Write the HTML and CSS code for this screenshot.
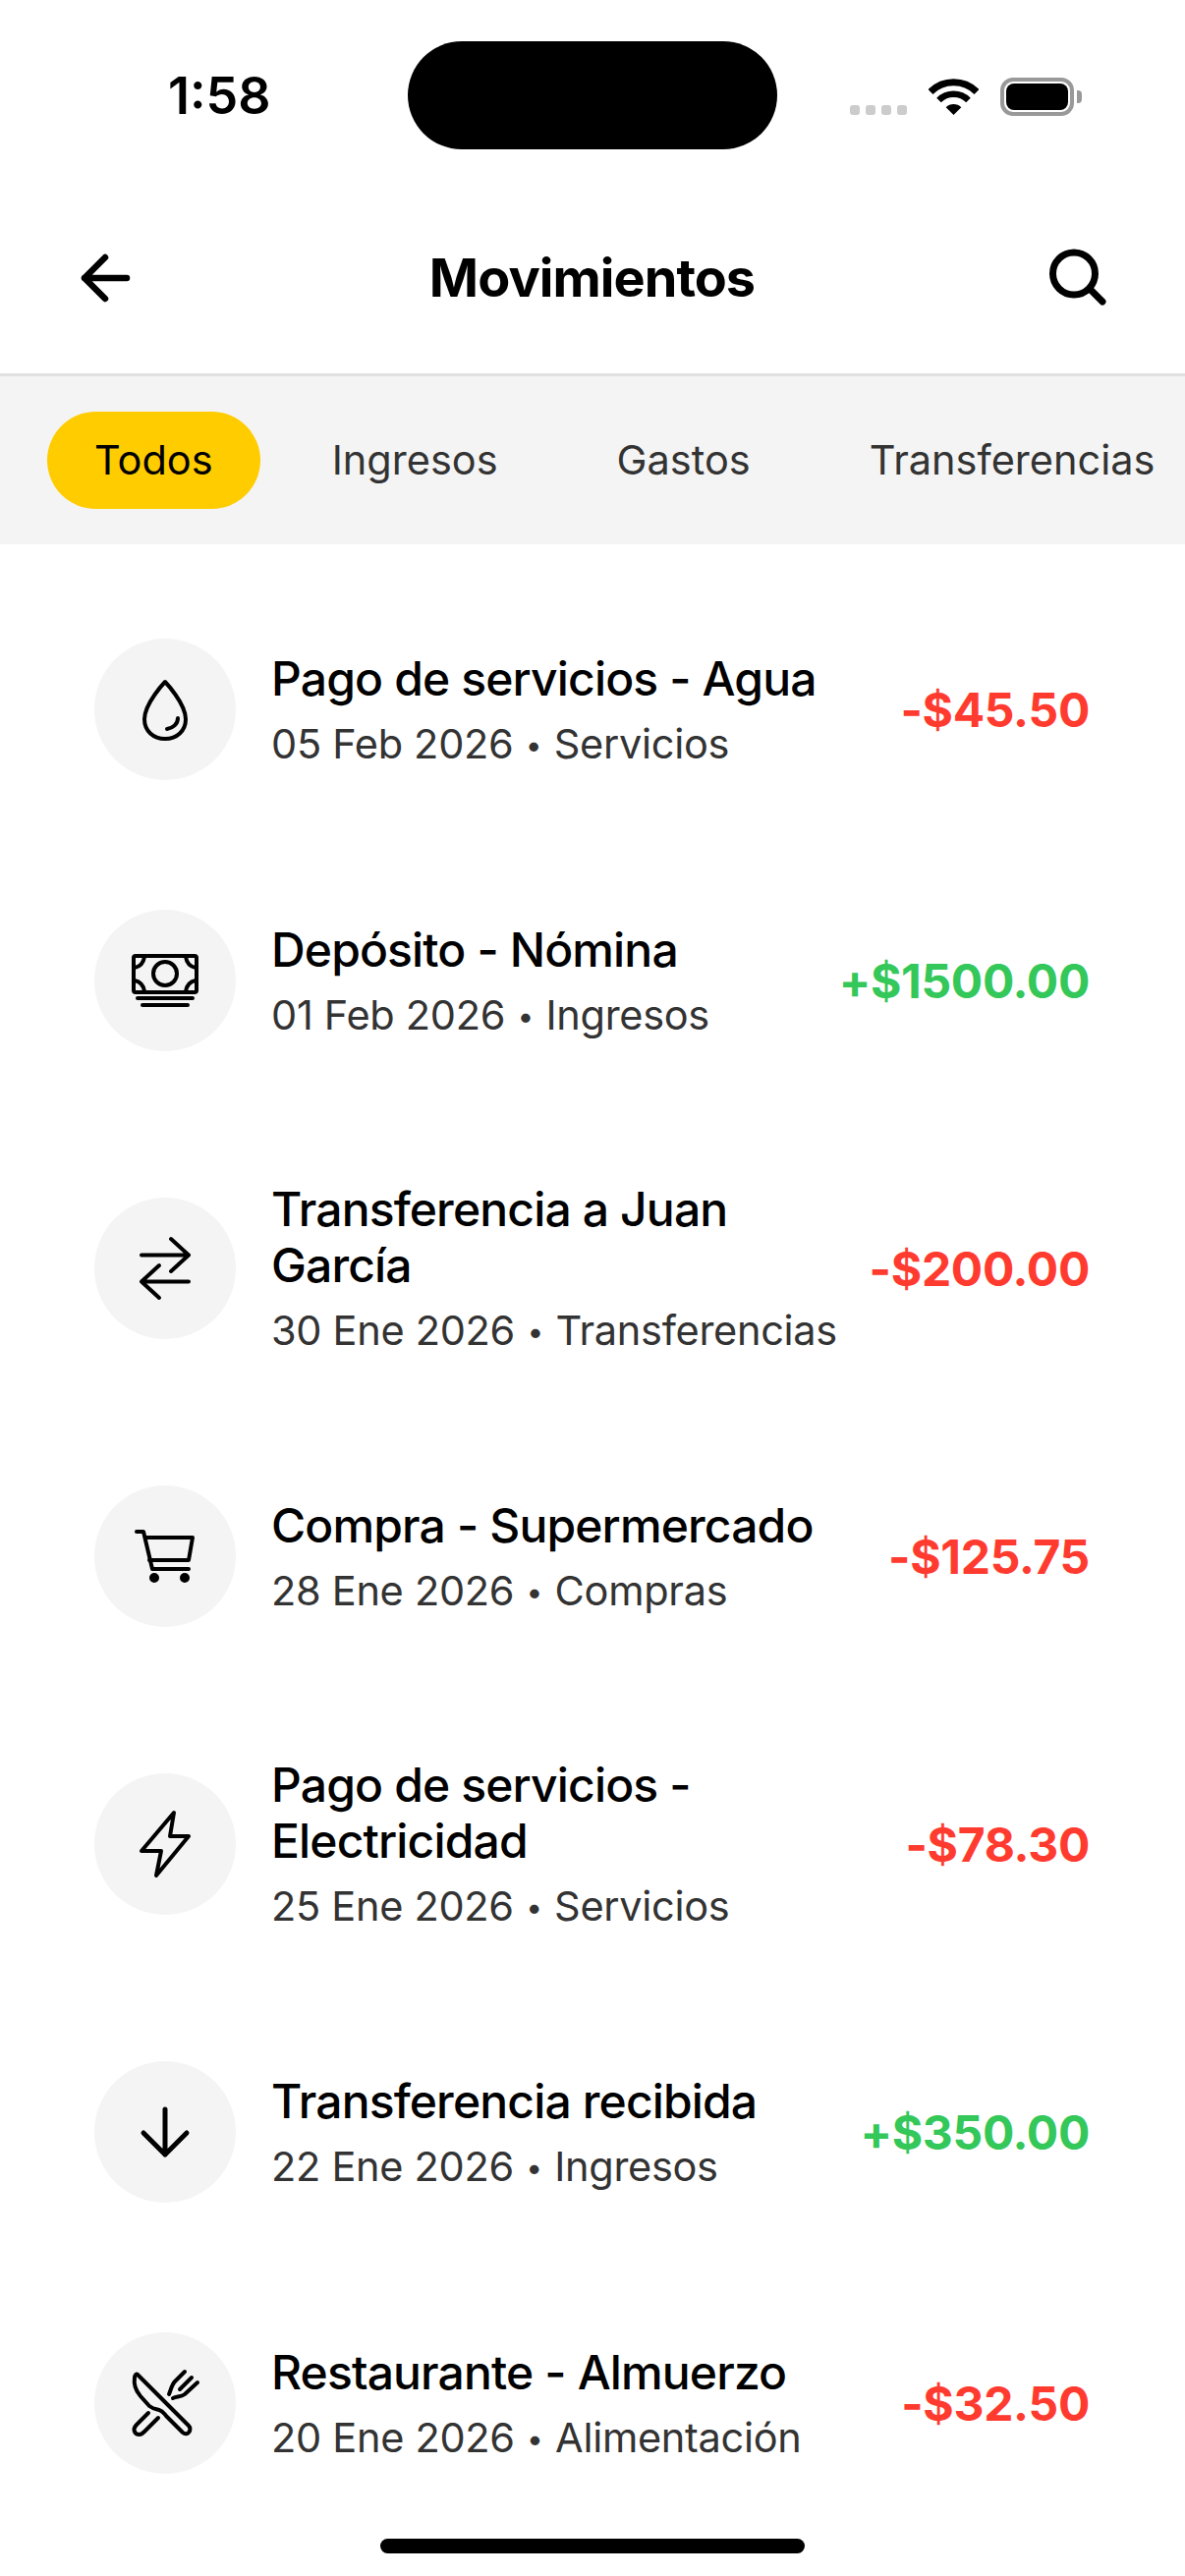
FILE: index.html
```html
<!DOCTYPE html>
<html lang="es">
<head>
    <meta charset="UTF-8">
    <title>Movimientos</title>
    <link rel="stylesheet" href="styles.css">
</head>
<body>
    <div class="screen">
        <div class="status-bar">
            <div class="status-time">1:58</div>
            <div class="island"></div>
            <div class="status-icons">
                <div class="signal"><span></span><span></span><span></span><span></span></div>
                <svg class="wifi" width="51" height="37" viewBox="0 0 51 37" fill="none" stroke="#000">
                    <path d="M2 13.5A33.25 33.25 0 0 1 49 13.5" stroke-width="7"/>
                    <path d="M10.5 22A21.25 21.25 0 0 1 40.5 22" stroke-width="6.5"/>
                    <path d="M25.5 37L17.7 29.2A11 11 0 0 1 33.3 29.2Z" fill="#000" stroke="none"/>
                </svg>
                <div class="battery"><div class="battery-fill"></div></div>
            </div>
        </div>

        <div class="header">
            <svg class="header-icon" width="60" height="60" viewBox="0 0 60 60" fill="none" stroke="#000" stroke-width="6.5" stroke-linecap="round" stroke-linejoin="round">
                <path d="M51 30H8M29 9L8 30L29 51"/>
            </svg>
            <h1 class="header-title">Movimientos</h1>
            <svg class="header-icon search" width="60" height="60" viewBox="0 0 60 60" fill="none" stroke="#000" stroke-width="7" stroke-linecap="round">
                <circle cx="26" cy="25.500" r="21.500"/>
                <path d="M42 41L55 54"/>
            </svg>
        </div>

        <div class="chips">
            <div class="chip active">Todos</div>
            <div class="chip">Ingresos</div>
            <div class="chip">Gastos</div>
            <div class="chip">Transferencias</div>
        </div>

        <div class="list">
            <div class="row">
                <div class="row-icon">
                    <svg viewBox="0 0 144 144" fill="none" stroke="#000" stroke-width="4" stroke-linecap="round" stroke-linejoin="round">
                        <path d="M72 44C72 44 51 66 51 82C51 94 60 102 72 102C84 102 93 94 93 82C93 66 72 44 72 44Z"/>
                        <path d="M74 92C80 91 85 87 85 81"/>
                    </svg>
                </div>
                <div class="row-text">
                    <div class="row-title">Pago de servicios - Agua</div>
                    <div class="row-sub">05 Feb 2026 <span class="sep">•</span> Servicios</div>
                </div>
                <div class="row-amount out">-$45.50</div>
            </div>

            <div class="row">
                <div class="row-icon">
                    <svg viewBox="0 0 144 144" fill="none" stroke="#000" stroke-width="4" stroke-linecap="round" stroke-linejoin="round">
                        <rect x="40" y="47" width="64" height="37" rx="2"/>
                        <circle cx="72" cy="65" r="12"/>
                        <path d="M41 59C46 58 50 54 51 48M103 59C98 58 94 54 93 48M41 72C46 73 50 77 51 83M103 72C98 73 94 77 93 83"/>
                        <path d="M44 90H100M49 97H95"/>
                    </svg>
                </div>
                <div class="row-text">
                    <div class="row-title">Depósito - Nómina</div>
                    <div class="row-sub">01 Feb 2026 <span class="sep">•</span> Ingresos</div>
                </div>
                <div class="row-amount in">+$1500.00</div>
            </div>

            <div class="row">
                <div class="row-icon">
                    <svg viewBox="0 0 144 144" fill="none" stroke="#000" stroke-width="4" stroke-linecap="round" stroke-linejoin="round">
                        <path d="M48 58.500H96M78 42L96 58.500L78 75"/>
                        <path d="M96 85.500H48M66 69L48 85.500L66 102"/>
                    </svg>
                </div>
                <div class="row-text">
                    <div class="row-title">Transferencia a Juan García</div>
                    <div class="row-sub">30 Ene 2026 <span class="sep">•</span> Transferencias</div>
                </div>
                <div class="row-amount out">-$200.00</div>
            </div>

            <div class="row">
                <div class="row-icon">
                    <svg viewBox="0 0 144 144" fill="none" stroke="#000" stroke-width="4" stroke-linecap="round" stroke-linejoin="round">
                        <path d="M43 47H50L59 85H96"/>
                        <path d="M52 53H100L96 76H56"/>
                        <circle cx="61" cy="94" r="3" fill="#000"/>
                        <circle cx="92" cy="94" r="3" fill="#000"/>
                    </svg>
                </div>
                <div class="row-text">
                    <div class="row-title">Compra - Supermercado</div>
                    <div class="row-sub">28 Ene 2026 <span class="sep">•</span> Compras</div>
                </div>
                <div class="row-amount out">-$125.75</div>
            </div>

            <div class="row">
                <div class="row-icon">
                    <svg viewBox="0 0 144 144" fill="none" stroke="#000" stroke-width="4" stroke-linecap="round" stroke-linejoin="round">
                        <path d="M81 40L77 64H96L63 104L68 79H48Z"/>
                    </svg>
                </div>
                <div class="row-text">
                    <div class="row-title">Pago de servicios - Electricidad</div>
                    <div class="row-sub">25 Ene 2026 <span class="sep">•</span> Servicios</div>
                </div>
                <div class="row-amount out">-$78.30</div>
            </div>

            <div class="row">
                <div class="row-icon">
                    <svg viewBox="0 0 144 144" fill="none" stroke="#000" stroke-width="5" stroke-linecap="round" stroke-linejoin="round">
                        <path d="M72 49V95M50 73L72 95L94 73"/>
                    </svg>
                </div>
                <div class="row-text">
                    <div class="row-title">Transferencia recibida</div>
                    <div class="row-sub">22 Ene 2026 <span class="sep">•</span> Ingresos</div>
                </div>
                <div class="row-amount in">+$350.00</div>
            </div>

            <div class="row">
                <div class="row-icon">
                    <svg viewBox="0 0 144 144" fill="none" stroke="#000" stroke-width="4" stroke-linecap="round" stroke-linejoin="round">
                        <path d="M44 43L96 95C100 99 95 106 90 102L74 86C71 83 70 80 66 79C62 78 60 78 56 75L47 65C41 58 40 52 41 46C41 43 43 42 44 43Z"/>
                        <path d="M55 82L43 94C39 98 40 104 46 104C48 104 49 103 51 101L65 87"/>
                        <path d="M92 40L82 50C79 53 78 58 76 63M99 46L87 58M105 51L92 63C88 66 84 65 80 67"/>
                    </svg>
                </div>
                <div class="row-text">
                    <div class="row-title">Restaurante - Almuerzo</div>
                    <div class="row-sub">20 Ene 2026 <span class="sep">•</span> Alimentación</div>
                </div>
                <div class="row-amount out">-$32.50</div>
            </div>
        </div>

        <div class="home-bar"></div>
    </div>
</body>
</html>
```

FILE: styles.css
```css
* {
    margin: 0;
    padding: 0;
    box-sizing: border-box;
}
body {
    font-family: 'Inter', 'Liberation Sans', sans-serif;
    background-color: #fff;
    color: #000;
}
.screen {
    width: 1206px;
    height: 2622px;
    position: relative;
    overflow: hidden;
    background-color: #fff;
}

/* status bar */
.status-bar {
    height: 168px;
    display: grid;
    grid-template-columns: 1fr 376px 1fr;
    padding-top: 42px;
}
.status-time {
    font-size: 52px;
    font-weight: 600;
    line-height: 60px;
    margin-top: 26px;
    padding-left: 171px;
}
.island {
    width: 376px;
    height: 110px;
    background-color: #000;
    border-radius: 56px;
}
.status-icons {
    display: flex;
    align-items: flex-end;
    height: 75px;
    padding-left: 74px;
}
.signal {
    display: flex;
    gap: 6px;
    margin-right: 22px;
}
.signal span {
    width: 10px;
    height: 10px;
    border-radius: 3px;
    background-color: #ccc;
}
.wifi {
    display: block;
    margin-right: 22px;
}
.battery {
    width: 75px;
    height: 39px;
    margin-bottom: -1px;
    border: 4px solid #999;
    border-radius: 13px;
    padding: 2px;
    position: relative;
}
.battery::after {
    content: '';
    position: absolute;
    left: 74px;
    top: 9px;
    width: 5px;
    height: 13px;
    background-color: #999;
    border-radius: 0 4px 4px 0;
}
.battery-fill {
    height: 100%;
    background-color: #000;
    border-radius: 8px;
}

/* header */
.header {
    height: 215px;
    display: grid;
    grid-template-columns: 1fr auto 1fr;
    align-items: center;
    padding: 17px 79px 0 78px;
    border-bottom: 3px solid #e0e0e0;
}
.header-icon {
    display: block;
}
.header-icon.search {
    justify-self: end;
}
.header-title {
    font-size: 54px;
    font-weight: 700;
    letter-spacing: -0.95px;
}

/* filter chips */
.chips {
    height: 171px;
    display: flex;
    align-items: center;
    gap: 25px;
    padding-left: 48px;
    background-color: #f4f4f4;
    overflow: hidden;
}
.chip {
    flex-shrink: 0;
    height: 99px;
    padding: 0 48px;
    border-radius: 50px;
    font-size: 41.5px;
    line-height: 99px;
    color: #333;
}
.chip.active {
    background-color: #ffcc00;
    color: #000;
}

/* movements */
.list {
    padding: 30px 48px 0;
}
.row {
    display: flex;
    align-items: center;
    padding: 66px 49px 66px 48px;
}
.row-icon {
    width: 144px;
    height: 144px;
    flex-shrink: 0;
    border-radius: 50%;
    background-color: #f4f4f4;
    margin-right: 36px;
}
.row-icon svg {
    display: block;
    width: 144px;
    height: 144px;
}
.row-text {
    flex: 1;
    min-width: 0;
}
.row-title {
    font-size: 48px;
    font-weight: 500;
    line-height: 57px;
    letter-spacing: -0.85px;
}
.row-sub {
    font-size: 41.5px;
    line-height: 51px;
    margin-top: 13px;
    letter-spacing: -0.3px;
    white-space: nowrap;
    color: #333;
}
.sep {
    font-size: 30px;
    vertical-align: 3px;
    line-height: 1;
    margin: 0 1px;
}
.row-amount {
    flex-shrink: 0;
    margin-left: 24px;
    font-size: 48px;
    font-weight: 700;
    letter-spacing: -0.3px;
}
.row-amount.out {
    color: #ff3b30;
}
.row-amount.in {
    color: #34c759;
}

.home-bar {
    position: absolute;
    left: 387px;
    bottom: 23px;
    width: 432px;
    height: 15px;
    border-radius: 8px;
    background-color: #000;
}
```
